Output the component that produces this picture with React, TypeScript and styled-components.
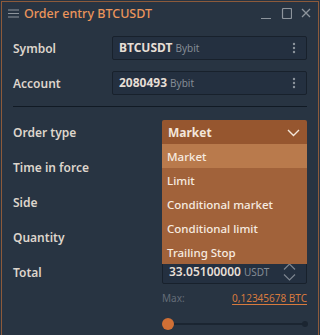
import type { FC } from 'react'
import styled, { createGlobalStyle } from 'styled-components'

const GlobalStyle = createGlobalStyle`
	html, body {
		margin: 0;
		padding: 0;
		background: #283442;
		font-family: 'Noto Sans', 'Open Sans', sans-serif;
	}
`

const orderTypes = [
	'Market',
	'Limit',
	'Conditional market',
	'Conditional limit',
	'Trailing Stop',
]

const Kebab: FC = () => (
	<svg width="4" height="12" viewBox="0 0 4 12">
		<circle cx="2" cy="2" r="1.2" fill="#8d949c" />
		<circle cx="2" cy="6" r="1.2" fill="#8d949c" />
		<circle cx="2" cy="10" r="1.2" fill="#8d949c" />
	</svg>
)

const App: FC = () => {
	return (
		<>
			<GlobalStyle />
			<Window>
				<TitleBar>
					<svg width="11" height="9" viewBox="0 0 11 9">
						<path d="M0 1h11M0 4.5h11M0 8h11" stroke="#8d949c" strokeWidth="1" />
					</svg>
					<Title>Order entry BTCUSDT</Title>
					<Controls>
						<svg width="11" height="11" viewBox="0 0 11 11">
							<path d="M0 10.5h10" stroke="#8d949c" strokeWidth="1" />
						</svg>
						<svg width="11" height="11" viewBox="0 0 11 11">
							<rect x="1.5" y="0.5" width="9" height="10" rx="1" fill="none" stroke="#8d949c" strokeWidth="1.2" />
						</svg>
						<svg width="10" height="10" viewBox="0 0 10 10">
							<path d="M1 1l8 8M9 1l-8 8" stroke="#8d949c" strokeWidth="1.3" />
						</svg>
					</Controls>
				</TitleBar>
				<Body>
					<Row $label={99}>
						<Label>Symbol</Label>
						<Field>
							<Value>BTCUSDT</Value>
							<Sub>Bybit</Sub>
							<FieldIcon>
								<Kebab />
							</FieldIcon>
						</Field>
					</Row>
					<Row $label={99}>
						<Label>Account</Label>
						<Field>
							<Value>2080493</Value>
							<Sub>Bybit</Sub>
							<FieldIcon>
								<Kebab />
							</FieldIcon>
						</Field>
					</Row>
					<Separator />
					<Row $label={149}>
						<Label>Order type</Label>
						<Select>
							<SelectHead>
								<span>Market</span>
								<svg width="13" height="8" viewBox="0 0 13 8">
									<path d="M1 1l5.5 5.5L12 1" fill="none" stroke="#f3e6da" strokeWidth="1.4" />
								</svg>
							</SelectHead>
							<Menu>
								{orderTypes.map((t, idx) => (
									<MenuItem key={`ot-${t}`} $active={idx === 0}>
										{t}
									</MenuItem>
								))}
							</Menu>
						</Select>
					</Row>
					<Row $label={149}>
						<Label>Time in force</Label>
						<div />
					</Row>
					<Row $label={149}>
						<Label>Side</Label>
						<div />
					</Row>
					<Row $label={149}>
						<Label>Quantity</Label>
						<div />
					</Row>
					<Row $label={149}>
						<Label>Total</Label>
						<Field>
							<BigValue>33.05100000</BigValue>
							<Sub>USDT</Sub>
							<FieldIcon>
								<svg width="13" height="18" viewBox="0 0 13 18">
									<path d="M1 6.5l5.5-5.5L12 6.5M1 11.5l5.5 5.5L12 11.5" fill="none" stroke="#7d858f" strokeWidth="1.2" />
								</svg>
							</FieldIcon>
						</Field>
					</Row>
					<MaxRow>
						<MaxLabel>Max:</MaxLabel>
						<MaxLink>0,12345678 BTC</MaxLink>
					</MaxRow>
					<SliderRow>
						<Track>
							<Thumb />
							<EndDot />
						</Track>
					</SliderRow>
				</Body>
			</Window>
		</>
	)
}

export default App

const Window = styled.div`
	margin: 1px 1px 0 1px;
	height: 334px;
	box-sizing: border-box;
	border: 1px solid #8c5a3b;
	border-bottom: none;
	background: #283442;
	overflow: hidden;
`

const TitleBar = styled.div`
	display: flex;
	align-items: center;
	height: 22px;
	padding: 0 6px 0 6px;
	gap: 5px;
`

const Title = styled.div`
	color: #ec955b;
	font-size: 12.5px;
	font-weight: 500;
	flex: 1;
`

const Controls = styled.div`
	display: flex;
	align-items: center;
	gap: 9px;
	padding-right: 1px;
`

const Body = styled.div`
	padding: 12px 11px 0 11px;
`

const Row = styled.div<{ $label: number }>`
	display: grid;
	grid-template-columns: ${({ $label }) => $label}px 1fr;
	align-items: center;
	height: 24px;
	margin-bottom: 11px;
`

const Label = styled.div`
	color: #ddd5cc;
	font-size: 12px;
	font-weight: 600;
`

const Field = styled.div`
	display: flex;
	align-items: baseline;
	height: 24px;
	box-sizing: border-box;
	border: 1px solid #18212c;
	border-radius: 2px;
	background: #243040;
	padding: 0 6px;
	line-height: 22px;
`

const Value = styled.span`
	color: #e6ded5;
	font-size: 12px;
	font-weight: 700;
`

const BigValue = styled.span`
	color: #e6ded5;
	font-size: 12px;
	font-weight: 600;
`

const Sub = styled.span`
	color: #858c95;
	font-size: 10px;
	margin-left: 3px;
`

const FieldIcon = styled.span`
	margin-left: auto;
	align-self: center;
	display: flex;
	padding-right: 4px;
`

const Separator = styled.div`
	height: 1px;
	background: #111a24;
	margin: 2px 0 13px 0;
`

const Select = styled.div`
	position: relative;
	height: 24px;
`

const SelectHead = styled.div`
	display: flex;
	align-items: center;
	justify-content: space-between;
	height: 24px;
	background: #96562f;
	border-radius: 2px 2px 0 0;
	padding: 1px 7px 0 6px;
	box-sizing: border-box;
	color: #f3e6da;
	font-size: 12px;
	font-weight: 700;
`

const Menu = styled.div`
	position: absolute;
	top: 24px;
	left: 0;
	right: 0;
	background: #a1623a;
	z-index: 2;
`

const MenuItem = styled.div<{ $active: boolean }>`
	height: 24px;
	line-height: 26px;
	padding: 0 5px;
	color: #f6ebe0;
	font-size: 11.5px;
	font-weight: 500;
	background: ${({ $active }) => ($active ? '#b97a4c' : 'transparent')};
`

const MaxRow = styled.div`
	display: flex;
	justify-content: space-between;
	margin: -9px 0 0 149px;
	height: 24px;
	align-items: center;
	font-size: 10px;
`

const MaxLabel = styled.span`
	color: #646d78;
`

const MaxLink = styled.span`
	color: #d77a3e;
	text-decoration: underline;
	text-underline-offset: 2px;
`

const SliderRow = styled.div`
	margin: 8px 0 0 149px;
	height: 12px;
	display: flex;
	align-items: center;
`

const Track = styled.div`
	position: relative;
	flex: 1;
	height: 2px;
	background: #1b2531;
	margin: 0 2px 0 6px;
`

const Thumb = styled.div`
	position: absolute;
	left: -6px;
	top: -5px;
	width: 12px;
	height: 12px;
	border-radius: 50%;
	background: #cf6f35;
`

const EndDot = styled.div`
	position: absolute;
	right: -3px;
	top: -2px;
	width: 6px;
	height: 6px;
	border-radius: 50%;
	background: #1b2531;
`
